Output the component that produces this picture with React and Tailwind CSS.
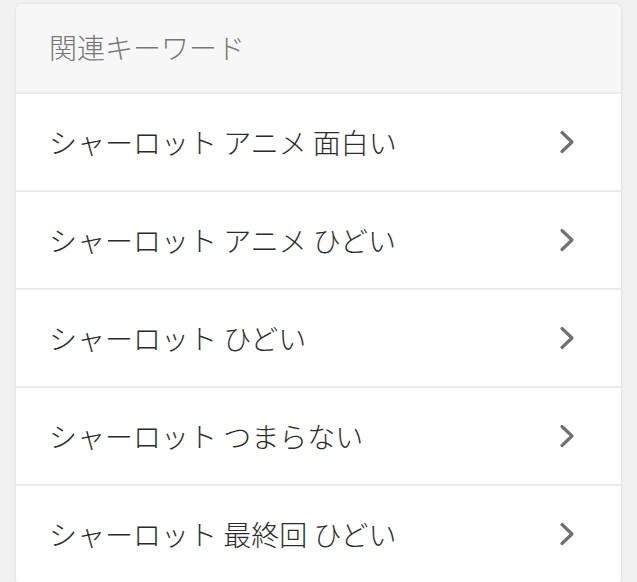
const keywords = [
  "シャーロット アニメ 面白い",
  "シャーロット アニメ ひどい",
  "シャーロット ひどい",
  "シャーロット つまらない",
  "シャーロット 最終回 ひどい",
];

function Chevron() {
  return (
    <svg viewBox="0 0 16 24" className="h-[24px] w-[16px]" fill="none">
      <path d="M3 2.5 L13 12 L3 21.5" stroke="#717171" strokeWidth="3.2" strokeLinecap="round" strokeLinejoin="round" />
    </svg>
  );
}

export default function App() {
  return (
    <div
      className="h-[582px] overflow-hidden bg-[#f1f1f1] px-4 pt-1"
      style={{ fontFamily: '"Noto Sans CJK JP", "Noto Sans", sans-serif' }}
    >
      <section className="overflow-hidden rounded-md bg-white shadow-[0_0_3px_rgba(0,0,0,0.12)]">
        {/* Header */}
        <div className="flex h-[90px] items-center border-b-2 border-[#ebebeb] bg-[#f7f7f7] px-[33px] pb-[2px]">
          <h2 className="text-[28px] font-light leading-none text-[#777]">関連キーワード</h2>
        </div>

        {/* Keyword list */}
        <ul>
          {keywords.map((k) => (
            <li key={k} className="border-b-2 border-[#ebebeb]">
              <a className="flex h-[96px] items-center justify-between pl-[33px] pr-[46px]">
                <span className="text-[28px] font-light leading-none text-[#2b2b2b]">{k}</span>
                <Chevron />
              </a>
            </li>
          ))}
        </ul>
      </section>
    </div>
  );
}
